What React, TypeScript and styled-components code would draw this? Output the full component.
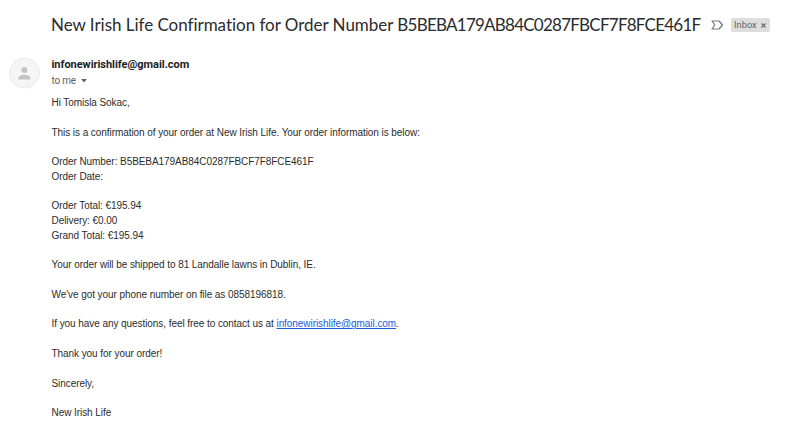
import React from "react";
import styled, { createGlobalStyle } from "styled-components";

const Global = createGlobalStyle`
  * { box-sizing: border-box; }
  body { margin: 0; background: #fff; font-family: "Liberation Sans", Arial, sans-serif; color: #2c2c2c; }
`;

const Page = styled.main`
  width: 785px;
  height: 441px;
  overflow: hidden;
  padding-top: 13px;
`;

const Header = styled.header`
  display: flex;
  align-items: center;
  height: 24px;
  padding-left: 51px;
`;

const Subject = styled.h1`
  margin: 0;
  width: 651px;
  flex: none;
  font: 400 17px/24px Lato, sans-serif;
  font-variant-ligatures: none;
  letter-spacing: -0.03px;
  color: #2a2b2e;
  white-space: nowrap;
`;

const OrderCode = styled.span`
  letter-spacing: -0.76px;
`;

const Important = styled.svg`
  flex: none;
  margin-left: 9px;
  width: 13px;
  height: 10px;
`;

const Label = styled.span`
  display: flex;
  align-items: center;
  justify-content: space-between;
  margin-left: 7px;
  width: 39px;
  height: 14px;
  padding: 0 4px 0 3px;
  border-radius: 2px;
  background: #ddd;
  color: #666;
  font: 400 9.3px/14px Roboto, sans-serif;
`;

const Message = styled.article`
  display: flex;
  margin-top: 20px;
  padding-left: 9px;
`;

const Avatar = styled.svg`
  width: 31px;
  height: 32px;
  flex: none;
  margin-right: 11.5px;
`;

const Sender = styled.div`
  height: 16px;
  font: 700 11px/16px Roboto, sans-serif;
  letter-spacing: -0.04px;
  color: #202124;
`;

const Recipient = styled.div`
  display: flex;
  align-items: center;
  gap: 5px;
  height: 16px;
  font: 400 10px/16px Roboto, sans-serif;
  letter-spacing: -0.2px;
  color: #5f6368;
`;

const Body = styled.div`
  margin-top: 7px;
  font-size: 10px;
  letter-spacing: -0.065px;
  line-height: 14.78px;
`;

const Line = styled.div`
  height: 14.78px;
  white-space: nowrap;
`;

const MailLink = styled.a`
  color: #1a5cdb;
  text-decoration: underline;
`;

const opening = [
  "Hi Tomisla Sokac,",
  "",
  "This is a confirmation of your order at New Irish Life. Your order information is below:",
  "",
  "Order Number: B5BEBA179AB84C0287FBCF7F8FCE461F",
  "Order Date:",
  "",
  "Order Total: €195.94",
  "Delivery: €0.00",
  "Grand Total: €195.94",
  "",
  "Your order will be shipped to 81 Landalle lawns in Dublin, IE.",
  "",
  "We've got your phone number on file as 0858196818.",
  "",
];

const closing = ["", "Thank you for your order!", "", "Sincerely,", "", "New Irish Life"];

export default function App() {
  return (
    <Page>
      <Global />
      <Header>
        <Subject>
          New Irish Life Confirmation for Order Number <OrderCode>B5BEBA179AB84C0287FBCF7F8FCE461F</OrderCode>
        </Subject>
        <Important viewBox="0 0 13 10">
          <path d="M1 1H8L11.5 5L8 9H1L3.8 5Z" fill="none" stroke="#777" strokeWidth="1.2" strokeLinejoin="round" />
        </Important>
        <Label>
          Inbox
          <svg width="5" height="5" viewBox="0 0 5 5"><path d="M.5 .5l4 4M4.5 .5l-4 4" stroke="#666" strokeWidth="1.2" /></svg>
        </Label>
      </Header>
      <Message>
        <Avatar viewBox="0 0 31 32">
          <circle cx="15.5" cy="16" r="15" fill="#f5f5f5" stroke="#e9e9e9" />
          <circle cx="15.3" cy="13" r="3" fill="#c4c4c4" />
          <path d="M9.3 22.5v-1.7c0-2 4-3 6-3s6 1 6 3v1.7z" fill="#c4c4c4" />
        </Avatar>
        <div>
          <Sender>infonewirishlife@gmail.com</Sender>
          <Recipient>
            to me
            <svg width="6" height="4"><path d="M0 0h6L3 3.5z" fill="#666" /></svg>
          </Recipient>
          <Body>
            {opening.map((text, i) => <Line key={i}>{text}</Line>)}
            <Line>
              If you have any questions, feel free to contact us at{" "}
              <MailLink>infonewirishlife@gmail.com</MailLink>.
            </Line>
            {closing.map((text, i) => <Line key={i}>{text}</Line>)}
          </Body>
        </div>
      </Message>
    </Page>
  );
}
